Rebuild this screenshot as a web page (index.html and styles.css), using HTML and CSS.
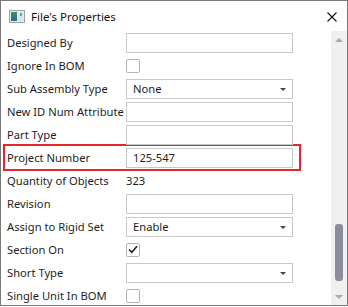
FILE: index.html
```html
<!DOCTYPE html>
<html lang="en">
<head>
  <meta charset="UTF-8">
  <link rel="stylesheet" href="styles.css">
  <title>File's Properties</title>
</head>
<body>
  <div class="window">
    <div class="titlebar">
      <svg class="app-icon" width="16" height="13" viewBox="0 0 16 13">
        <defs>
          <linearGradient id="pane" x1="0" y1="0" x2="0" y2="1">
            <stop offset="0" stop-color="#3f8a6a"/>
            <stop offset="1" stop-color="#2a6b8c"/>
          </linearGradient>
        </defs>
        <rect x="0.5" y="0.5" width="15" height="12" fill="#e9ecef" stroke="#9aa0a6"/>
        <rect x="2" y="2" width="6" height="9" fill="url(#pane)"/>
        <rect x="9" y="2" width="5" height="9" fill="#d6e4ee"/>
        <rect x="11" y="3" width="2" height="3" fill="#7f9bb0"/>
      </svg>
      <span class="title">File's Properties</span>
      <svg class="close" width="10" height="10" viewBox="0 0 10 10">
        <path d="M0.5 0.5 L9.5 9.5 M9.5 0.5 L0.5 9.5" stroke="#111" stroke-width="1.1"/>
      </svg>
    </div>
    <div class="content">
      <div class="props">
        <div class="row"><span class="label">Designed By</span><div class="field"></div></div>
        <div class="row"><span class="label">Ignore In BOM</span><div class="check"></div></div>
        <div class="row"><span class="label">Sub Assembly Type</span><div class="field select">None<i class="caret"></i></div></div>
        <div class="row"><span class="label">New ID Num Attribute</span><div class="field"></div></div>
        <div class="row"><span class="label">Part Type</span><div class="field"></div></div>
        <div class="row highlight"><span class="label">Project Number</span><div class="field">125-547</div></div>
        <div class="row"><span class="label">Quantity of Objects</span><span class="value">323</span></div>
        <div class="row"><span class="label">Revision</span><div class="field"></div></div>
        <div class="row"><span class="label">Assign to Rigid Set</span><div class="field select">Enable<i class="caret"></i></div></div>
        <div class="row"><span class="label">Section On</span><div class="check checked">
          <svg width="10" height="9" viewBox="0 0 10 9"><path d="M1 4.5 L3.8 7.3 L9 1.2" fill="none" stroke="#222" stroke-width="1.6"/></svg>
        </div></div>
        <div class="row"><span class="label">Short Type</span><div class="field select"><i class="caret"></i></div></div>
        <div class="row"><span class="label">Single Unit In BOM</span><div class="check"></div></div>
      </div>
      <div class="scrollbar">
        <i class="arrow up"></i>
        <div class="track"><div class="thumb"></div></div>
        <i class="arrow down"></i>
      </div>
    </div>
  </div>
</body>
</html>
```

FILE: styles.css
```css
body {
  margin: 0;
  background: #ffffff;
  font-family: "Noto Sans", "Open Sans", sans-serif;
  font-size: 11.2px;
  color: #1e1e1e;
}

.window {
  width: 348px;
  height: 306px;
  box-sizing: border-box;
  border: 1px solid #7a7a7a;
  background: #ffffff;
  display: flex;
  flex-direction: column;
}

.titlebar {
  height: 30px;
  display: flex;
  align-items: center;
  padding-left: 8px;
  flex-shrink: 0;
}

.app-icon {
  margin-right: 6px;
  margin-top: 1px;
}

.title {
  flex: 1;
  font-size: 11.5px;
  color: #111;
}

.close {
  margin-right: 10px;
  margin-top: 1px;
}

.content {
  flex: 1;
  display: flex;
  overflow: hidden;
}

.props {
  flex: 1;
  padding-left: 4px;
  overflow: hidden;
}

.row {
  width: 294px;
  height: 23px;
  display: flex;
  align-items: center;
}

.label {
  width: 119px;
  padding-left: 2px;
  white-space: nowrap;
  flex-shrink: 0;
}

.highlight {
  outline: 2px solid #e5262d;
}

.field {
  width: 167px;
  height: 20px;
  box-sizing: border-box;
  border: 1px solid #c9c9c9;
  background: #ffffff;
  padding-left: 6px;
  line-height: 18px;
  position: relative;
}

.caret {
  position: absolute;
  right: 6px;
  top: 8px;
  border-left: 3px solid transparent;
  border-right: 3px solid transparent;
  border-top: 3px solid #444;
}

.check {
  width: 14px;
  height: 14px;
  box-sizing: border-box;
  border: 1px solid #b3b3b3;
  border-radius: 2px;
  display: flex;
  align-items: center;
  justify-content: center;
}

.scrollbar {
  width: 16px;
  background: #f0f0f0;
  display: flex;
  flex-direction: column;
  align-items: center;
}

.arrow {
  border-left: 4px solid transparent;
  border-right: 4px solid transparent;
  margin: 7px 0;
}

.arrow.up {
  border-bottom: 4px solid #a8a8b4;
}

.arrow.down {
  border-top: 4px solid #a8a8b4;
  margin-bottom: 6px;
}

.track {
  flex: 1;
  width: 100%;
  display: flex;
  flex-direction: column;
  justify-content: flex-end;
  align-items: center;
  padding-bottom: 7px;
}

.thumb {
  width: 8px;
  height: 57px;
  border-radius: 3px;
  background: #8b8d9b;
}
```
